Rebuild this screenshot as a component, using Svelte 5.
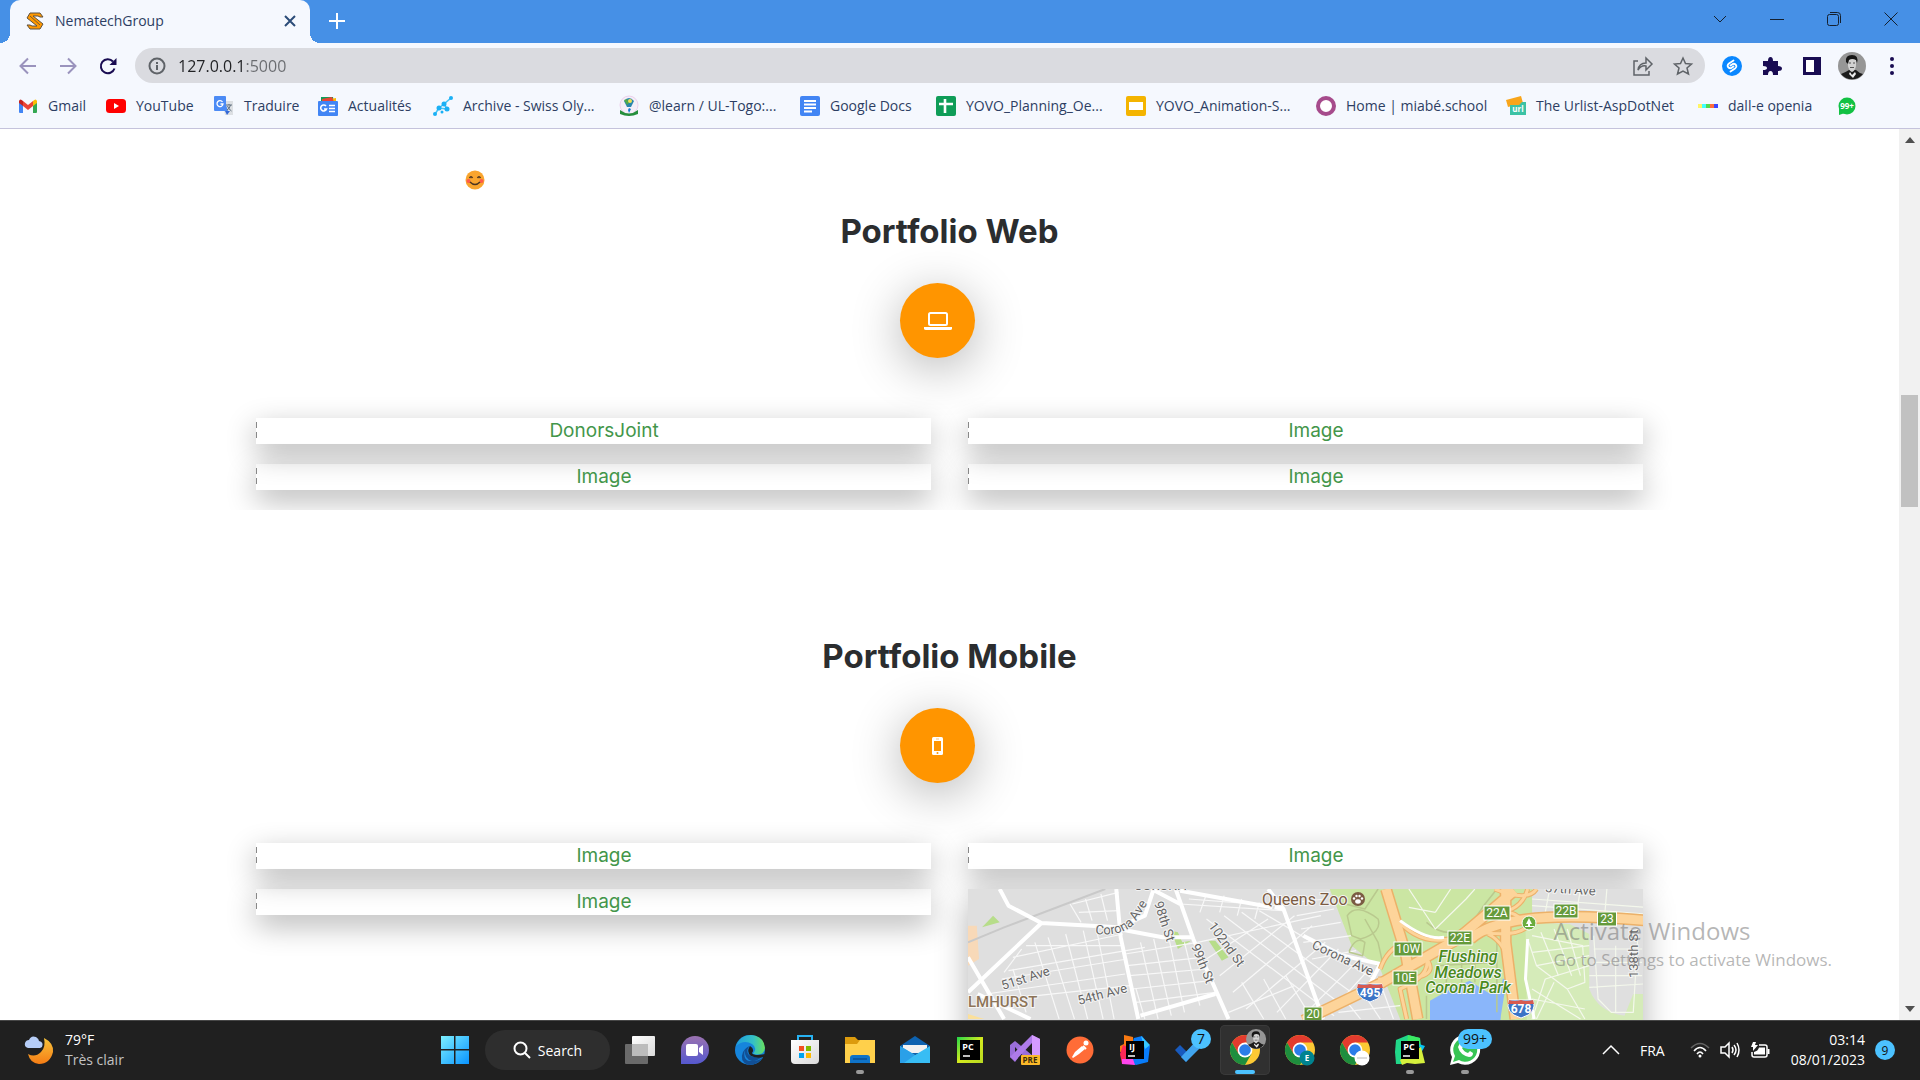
<script>
  const bookmarks = [
    ['gmail', 'Gmail'],
    ['youtube', 'YouTube'],
    ['translate', 'Traduire'],
    ['news', 'Actualités'],
    ['archive', 'Archive - Swiss Oly...'],
    ['learn', '@learn / UL-Togo:...'],
    ['docs', 'Google Docs'],
    ['sheets', 'YOVO_Planning_Oe...'],
    ['slides', 'YOVO_Animation-S...'],
    ['ring', 'Home | miabé.school'],
    ['urlist', 'The Urlist-AspDotNet'],
    ['dalle', 'dall-e openia'],
    ['chat99', '']
  ];

  const apps = [
    { icon: 'taskview', name: 'Task view' },
    { icon: 'meet', name: 'Chat' },
    { icon: 'edge', name: 'Microsoft Edge' },
    { icon: 'store', name: 'Microsoft Store' },
    { icon: 'explorer', name: 'File Explorer', open: true },
    { icon: 'mail', name: 'Mail' },
    { icon: 'pycharmEdu', name: 'PyCharm Edu' },
    { icon: 'vs', name: 'Visual Studio Preview' },
    { icon: 'postman', name: 'Postman' },
    { icon: 'intellij', name: 'IntelliJ IDEA' },
    { icon: 'todo', name: 'To Do', badge: '7' },
    { icon: 'chromePhoto', name: 'Google Chrome', active: true },
    { icon: 'chromeE', name: 'Google Chrome E' },
    { icon: 'chromeW', name: 'Google Chrome 2' },
    { icon: 'pycharm', name: 'PyCharm', open: true },
    { icon: 'whatsapp', name: 'WhatsApp', badge: '99+', open: true }
  ];

  const sections = [
    { title: 'Portfolio Web', icon: 'laptop', items: ['DonorsJoint', 'Image', 'Image', 'Image'], map: false },
    { title: 'Portfolio Mobile', icon: 'phone', items: ['Image', 'Image', 'Image'], map: true }
  ];

  const exits = [
    ['22A', 529, 24, 26], ['22B', 598, 22, 24], ['23', 639, 30, 19], ['22E', 492, 49, 24],
    ['10W', 440, 60, 28], ['10E', 437, 89, 24], ['20', 345, 125, 18]
  ];
  const shields = [['495', 402, 103], ['678', 553, 119]];
</script>

{#snippet chrome()}
  <circle cx="15" cy="15" r="15" fill="#fcc934" />
  <path d="M2 7.5A15 15 0 0 1 28 7.5L15 7.5L15 15L8.5 18.7Z" fill="#e33b2e" />
  <path d="M2 7.5A15 15 0 0 0 15 30L21.5 18.7L8.5 18.7Z" fill="#1e8e3e" />
  <circle cx="15" cy="15" r="7.4" fill="#fff" />
  <circle cx="15" cy="15" r="5.8" fill="#2b7de9" />
{/snippet}

{#snippet portrait()}
  <circle cx="14" cy="14" r="14" fill="#969696" />
  <path d="M3 22Q8 20 11 18L18 18Q21 21 25 22A14 14 0 0 1 3 22Z" fill="#1c1c1c" />
  <path d="M10 8Q14 4 18 8L18 14Q17 19 14 20Q11 19 10 14Z" fill="#d2d2d2" />
  <path d="M8 10Q7 3 14 3Q21 3 19 11L18 8Q14 6 11 8L10 12Z" fill="#161616" />
  <path d="M12 15.500h4M11 11h2M15 11h2" stroke="#555" stroke-width="1" />
  <path d="M12 20l2 3 3-3 1 2-3 4-4-4Z" fill="#eee" />
{/snippet}

{#snippet bookmarkIcon(name)}
  <svg class="bm-icon" viewBox="0 0 20 20" aria-hidden="true">
    {#if name === 'gmail'}
      <path d="M1 5v11q0 1 1 1h3V9Z" fill="#4285f4" />
      <path d="M15 9v8h3q1 0 1-1V5Z" fill="#34a853" />
      <path d="M15 5v5l4-3V5q-1-3-4 0Z" fill="#fbbc04" />
      <path d="M5 5l5 4 5-4v5l-5 4-5-4Z" fill="#ea4335" />
      <path d="M1 7l4 3V5Q2 2 1 5Z" fill="#c5221f" />
    {:else if name === 'youtube'}
      <rect y="3" width="20" height="14" rx="3.500" fill="#f00" /><path d="M8 7l5 3-5 3Z" fill="#fff" />
    {:else if name === 'translate'}
      <path d="M8 5h11v14h-8Z" fill="#dcdfe3" /><path d="M11 15h5l-3 4Z" fill="#3367d6" />
      <rect width="12" height="15" rx="1" fill="#4c8bf5" /><path d="M9 0l5 15H8Z" fill="#4c8bf5" />
      <path d="M8.500 6A3 3 0 1 0 9 8H6.500" fill="none" stroke="#fff" stroke-width="1.300" />
      <path d="M12 9h6M15 8v1M16.500 9q-1 4-3.500 5M13.500 10q1 3 4 5" fill="none" stroke="#607080" />
    {:else if name === 'news'}
      <path d="M3 1l12 0 1 5H3Z" fill="#0f9d58" /><path d="M8 4l10-2v5H7Z" fill="#fbbc04" /><path d="M4 3l10-2 2 5H4Z" fill="#ea4335" />
      <rect y="5" width="20" height="15" rx="1" fill="#4285f4" />
      <path d="M8 10A3 3 0 1 0 8.500 13H6M11 9.500h6M11 12.500h6M11 15.500h6" fill="none" stroke="#fff" stroke-width="1.600" />
    {:else if name === 'archive'}
      <path d="M2 18L6 12L14 13L11 8L18 2M6 12L11 8" fill="none" stroke="#48c4f4" stroke-width="1.600" />
      <g fill="#1ab0f5"><circle cx="2" cy="18" r="2" /><circle cx="6" cy="12" r="2.500" /><circle cx="14" cy="13" r="2.500" /><circle cx="11" cy="8" r="2.500" /><circle cx="18" cy="2" r="2" /><circle cx="9" cy="16" r="1.500" /></g>
    {:else if name === 'learn'}
      <circle cx="10" cy="9" r="9" fill="#f4eef8" stroke="#ecd0ec" /><path d="M5 5Q10-1 15 5L12 11H8Z" fill="#2985ad" />
      <path d="M5 4l3-1 2 4-2 2Z" fill="#50a84b" /><circle cx="11" cy="5" r="2" fill="#eee053" /><path d="M10 12l2 1-2 4-1-3Z" fill="#1678d0" />
      <path d="M1 14Q10 21 19 14V18Q10 22 1 18Z" fill="#258f3c" />
    {:else if name === 'docs'}
      <rect width="20" height="20" rx="2" fill="#4285f4" /><path d="M4 5h12M4 8.500h12M4 12h12M4 15.500h8" stroke="#fff" stroke-width="1.800" />
    {:else if name === 'sheets'}
      <rect width="20" height="20" rx="2" fill="#0f9d58" /><path d="M9 3v14M3 8h14" stroke="#fff" stroke-width="2.600" />
    {:else if name === 'slides'}
      <rect width="20" height="20" rx="2" fill="#f4b400" /><rect x="3" y="6" width="14" height="8" fill="#fff" />
    {:else if name === 'ring'}
      <circle cx="10" cy="10" r="8" fill="#fff" stroke="#a64b8c" stroke-width="4" />
    {:else if name === 'urlist'}
      <path d="M0 4L15 0l2 7L2 11Z" fill="#f8a51b" /><rect x="4" y="6" width="16" height="13" fill="#3cc2a5" />
      <path d="M4 9h9l3-3v-1L4 6Z" fill="#f8a51b" />
      <text x="12" y="16" class="tiny bold">url</text>
    {:else if name === 'dalle'}
      <path d="M0 8h4v4H0Z" fill="#fff566" /><path d="M4 8h4v4H4Z" fill="#42ffff" /><path d="M8 8h4v4H8Z" fill="#51da4c" /><path d="M12 8h4v4h-4Z" fill="#ff6e3c" /><path d="M16 8h4v4h-4Z" fill="#3c46ff" />
    {:else}
      <circle cx="10" cy="10" r="8.500" fill="#12c143" /><path d="M2 12v7l6-2Z" fill="#12c143" /><text x="10" y="13" class="tiny bold">99+</text>
    {/if}
  </svg>
{/snippet}

{#snippet appIcon(name)}
  <svg class="app-icon" viewBox="0 0 30 30" aria-hidden="true">
    {#if name === 'taskview'}
      <rect x="7" y="1" width="23" height="20" rx="1" fill="url(#g-white)" /><rect x="0" y="9" width="23" height="20" rx="1" fill="#7d7d7d" opacity=".8" /><rect x="7" y="9" width="16" height="12" fill="#bcbcbc" />
    {:else if name === 'meet'}
      <path d="M1 29V15A14 14 0 1 1 15 29Z" fill="url(#g-meet)" /><rect x="6" y="9" width="12" height="12" rx="2" fill="#fff" /><path d="M19 13l4-3v10l-4-3Z" fill="#fff" />
    {:else if name === 'edge'}
      <circle cx="15" cy="15" r="15" fill="#1685dc" />
      <path d="M1 11Q5 0 16 0Q29 1 30 13Q29 21 18 19Q23 13 17 9Q9 4 1 11Z" fill="url(#g-edge)" />
      <path d="M10 15Q7 27 18 26Q24 26 28 22Q22 31 13 30Q4 26 8 17Q11 12 15 11Q10 15 14 20Q19 24 28 21Q23 26 17 26Q9 24 10 15Z" fill="#114f95" />
      <path d="M15 11Q20 14 17 18Q18 20 23 20L30 19L29 22Q22 24 16 21Q11 17 15 11Z" fill="#202020" />
    {:else if name === 'store'}
      <path d="M8 8V1h14v7" fill="none" stroke="#27b2f2" stroke-width="2" /><path d="M1 5h28v20q0 4-4 4H5q-4 0-4-4Z" fill="url(#g-white)" />
      <path d="M9 11h5v5H9Z" fill="#f25022" /><path d="M16 11h5v5h-5Z" fill="#7fba00" /><path d="M9 18h5v5H9Z" fill="#00a4ef" /><path d="M16 18h5v5h-5Z" fill="#ffb900" />
    {:else if name === 'explorer'}
      <path d="M0 2h10l3 3h17v5H0Z" fill="#dc9b0d" /><path d="M0 9l12 0 3-4h15v23H0Z" fill="#ffd04b" /><path d="M5 28v-5q0-3 3-3h14q3 0 3 3v5Z" fill="#0f73c8" /><path d="M8 24h14" stroke="#0b4f95" stroke-width="1.500" />
    {:else if name === 'mail'}
      <path d="M0 11L15 1l15 10-15 9Z" fill="#0d62b0" /><path d="M3 10h24v8H3Z" fill="#f1f1f1" /><path d="M0 11l15 9 15-9v17H0Z" fill="#38bdf4" /><path d="M0 11l15 9-11 8H0Z" fill="#2aa0e8" />
    {:else if name === 'pycharmEdu'}
      <rect x="2" y="2" width="26" height="26" fill="url(#g-edu)" /><rect x="5" y="5" width="20" height="20" fill="#000" /><text x="13" y="15" class="ide">PC</text><path d="M8 21h7" stroke="#fff" stroke-width="1.500" />
    {:else if name === 'vs'}
      <path d="M0 10l5-4 18 15v4L18 26 5 12v8l3 3-3 4-5-5Z" fill="#9b6edb" /><path d="M0 22L22 0l8 4v22l-8 3V8L5 26Z" fill="#ae7bea" /><path d="M22 0l8 4v22l-8 3Z" fill="#d59bff" />
      <rect x="11" y="20" width="19" height="10" rx="1" fill="#fbb92a" /><text x="20" y="28" class="pre">PRE</text>
    {:else if name === 'postman'}
      <circle cx="15" cy="15" r="13.500" fill="#ff6c37" /><path d="M7 22l3-5 7-6 3 3-6 5-6 4Z" fill="#fff" /><circle cx="21" cy="8" r="2.500" fill="#fff" /><path d="M18 11l3 3" stroke="#fff" stroke-width="2" />
    {:else if name === 'intellij'}
      <path d="M4 0l9 2 1 12L0 17V11l4-2Z" fill="#f97a12" /><path d="M3 10l11 5-2 13-10 1-2-10Z" fill="#fe2857" /><path d="M14 3l8-2 8 10-2 16-12 3-9-3Z" fill="#087cfa" /><path d="M21 1l9 9-5 4Z" fill="#36c7ff" /><path d="M2 24l11 0 2 6-13-1Z" fill="#ff45ed" />
      <rect x="6" y="6" width="18" height="18" fill="#000" /><text x="12" y="15" class="ide">IJ</text><path d="M8 21h7" stroke="#fff" stroke-width="1.500" />
    {:else if name === 'todo'}
      <path d="M0 15l5-5 11 11-5 6Z" fill="#185abd" /><path d="M6 22L23 4l6 5-18 18Z" fill="#41a5ee" />
    {:else if name === 'chromePhoto'}
      {@render chrome()}<g transform="translate(16 -6) scale(.72)">{@render portrait()}</g>
    {:else if name === 'chromeE'}
      {@render chrome()}<circle cx="22" cy="23" r="7.500" fill="#00838f" /><text x="22" y="26" class="pre light">E</text>
    {:else if name === 'chromeW'}
      {@render chrome()}<circle cx="22" cy="23" r="7.500" fill="#fff" /><path d="M17 23h10" stroke="#bbb" />
    {:else if name === 'pycharm'}
      <path d="M1 5l12-5 12 3 1 8L8 29H1L0 17Z" fill="#21d789" /><path d="M13 0l12 3 0 7-13-1Z" fill="#3bea62" /><path d="M24 9l6 2-4 7Z" fill="#07c3f2" /><path d="M5 25L26 12l4 16-10 1-8-1-5 2Z" fill="#d6f03c" />
      <rect x="6" y="6" width="18" height="18" fill="#000" /><text x="14" y="15" class="ide">PC</text><path d="M8 21h7" stroke="#fff" stroke-width="1.500" />
    {:else}
      <path d="M0 30l2-8A15 15 0 1 1 8 28Z" fill="#fff" /><path d="M3 27l2-6A12 12 0 1 1 9 25Z" fill="#37c553" />
      <path d="M10 8q2-1 3 2l0 2-1 1q2 4 6 5l2-2 3 2q0 4-4 4Q10 20 8 12Z" fill="#fff" />
    {/if}
  </svg>
{/snippet}

{#snippet map()}
  <svg class="map" viewBox="0 0 675 180" role="img" aria-label="Map of Flushing Meadows Corona Park">
    <rect width="675" height="180" fill="#dfdfdf" />
    <g class="shapes" transform="matrix(.44 0 0 .33333 -7.92 -10)">
      <path d="M840 30H1300V600H1010L1000 420L955 270L890 200Z" fill="#cbe6a3" />
      <path d="M1285 130L1385 135L1430 165V330Q1450 400 1510 410L1530 345H1560V600H1290Z" fill="#d5ebb9" />
      <path d="M18 140l20 0 5 100-25 20Z" fill="#f8d9b8" /><path d="M50 145l25-35 15 20Z" fill="#b7dd8a" />
      <path d="M480 155l15 5 10 30 20-5-30 25ZM565 185l15 0 30 50-15 10Z" fill="#b7dd8a" />
      <path d="M1068 600V365L1108 335L1158 305L1205 345L1228 335V600Z" fill="#8ab6fa" />
      <path class="water" d="M1236 175Q1240 250 1262 345M1222 430L1238 300" />
      <path class="minor" d="M250 75L275 130M285 60L300 125M320 45L335 125M255 75L360 40M270 100L360 95M110 275L420 205M120 235L370 165M150 200L370 200M95 300L380 240M60 345L375 285M105 360L385 320M170 190L225 420M200 175L260 420M240 165L290 420M280 155L325 420M310 150L350 420M140 210L100 280M120 270L150 400M400 330L420 420M380 260L550 235M385 290L560 270M390 330L570 305M400 370L580 340M375 225L540 190M410 190L450 420M440 180L480 410M475 180L510 400M510 190L545 380" />
      <path class="minor" d="M520 60L720 80M500 75L735 95M560 45L545 100M600 50L590 100M640 60L630 110M680 70L670 120M560 120L850 410M600 110L870 380M640 100L900 350M680 95L940 300M540 190L820 110M560 240L700 120M590 290L760 110M620 340L800 140M650 390L830 190M720 400L860 210M780 410L900 250M840 400L930 270M760 70L830 60M765 110L850 90M775 150L865 130M780 190L890 170M800 240L900 215" />
      <path class="minor" d="M610 400L760 320M640 310L690 420M690 300L740 420M740 290L800 420M880 370L910 420M920 350L955 420M960 330L985 420M860 400L1000 380" />
      <path class="rail" d="M18 190L100 145L330 30" />
      <path class="street" d="M18 340L185 132L360 145L420 110L440 30M355 30L365 175L405 420M185 132L110 80L90 30M18 235L100 420M40 345L160 420M500 75L435 30M490 30L530 180L610 420M500 35L710 85M715 85L735 90L825 420M700 30L735 90M360 150L460 175L530 175M580 345L410 410M780 170L870 230L955 255L930 320" />
      <path class="path" d="M880 110Q900 70 950 120Q960 160 910 180L890 170ZM885 215Q900 170 920 190L915 230L885 220ZM920 120L950 190L960 250M860 70L920 90L950 30M1060 130Q1130 210 1190 80L1220 30M1080 260L1220 250M1110 240L1105 310M1140 245V310M1170 245V310M1060 350V420M1220 190L1220 400" />
      <path class="parkpath" d="M1020 30L1080 150L1150 60L1170 30M1080 100L1115 30M1080 100L1020 85M1290 180L1310 260L1380 330L1420 310L1415 200L1300 170M1320 160L1360 290M1350 150L1390 290M1380 150L1410 290M1300 220L1430 200M1310 260L1430 230M1330 300L1430 260M1300 330L1410 420M1330 300L1300 420M1350 310L1310 420M1380 330L1420 420M1300 360L1420 390M1440 170L1450 360L1480 400L1530 400L1540 180M1440 210H1550M1440 250H1550M1430 290H1550M1430 325L1552 315M1490 200V400M1300 60L1560 85M1300 80L1560 105M1340 30L1330 100M1410 30L1400 110M1470 30L1465 110" />
      <path class="casing thick" d="M968 30L1012 220L1040 420M780 425L960 310L1130 180L1260 35M1240 30L1240 190L1262 420M1160 180Q1240 85 1560 125" />
      <path class="casing" d="M985 110Q1040 200 1110 180L1200 110Q1250 75 1290 140Q1270 175 1180 160L1060 240Q1070 290 1000 330L1015 420M955 270Q970 210 1010 190M1290 30Q1275 100 1215 100L1100 200M1215 30Q1290 70 1310 30M1200 165Q1240 190 1250 270M950 300Q1100 310 1060 240" />
      <path class="road thick" d="M968 30L1012 220L1040 420M780 425L960 310L1130 180L1260 35M1240 30L1240 190L1262 420M1160 180Q1240 85 1560 125" />
      <path class="road" d="M985 110Q1040 200 1110 180L1200 110Q1250 75 1290 140Q1270 175 1180 160L1060 240Q1070 290 1000 330L1015 420M955 270Q970 210 1010 190M1290 30Q1275 100 1215 100L1100 200M1215 30Q1290 70 1310 30M1200 165Q1240 190 1250 270M950 300Q1100 310 1060 240" />
      <path class="edge-line" d="M1290 180L1285 300L1305 420M1000 125Q1060 185 1100 175" />
      <path d="M18 405L55 420H18Z" fill="#fbe09c" />
    </g>
    <path id="corona-curve" d="M127 45Q155 48 167 34L185 6" fill="none" />
    <g class="labels">
      <text x="166" y="1">CORONA</text>
      <text><textPath href="#corona-curve">Corona Ave</textPath></text>
      <text transform="translate(186 14) rotate(72)">98th St</text>
      <text transform="translate(223 57) rotate(68)">99th St</text>
      <text transform="translate(240 37) rotate(54)">102nd St</text>
      <text transform="translate(343 59) rotate(25)">Corona Ave</text>
      <text transform="translate(35 101) rotate(-18)">51st Ave</text>
      <text transform="translate(111 116) rotate(-15)">54th Ave</text>
      <text transform="translate(670 89) rotate(-90)">138th St</text>
      <text transform="translate(577 3) rotate(4)">37th Ave</text>
      <text class="brown" x="294" y="16">Queens Zoo</text>
      <text class="brown area" x="0" y="118">LMHURST</text>
      <g class="park"><text x="500" y="73">Flushing</text><text x="500" y="89">Meadows</text><text x="500" y="104">Corona Park</text></g>
    </g>
    <circle cx="390" cy="10" r="7" fill="#7b5b43" />
    <g fill="#fff"><ellipse cx="390" cy="12.500" rx="2.800" ry="2.200" /><circle cx="386" cy="9.500" r="1.200" /><circle cx="388.500" cy="7" r="1.200" /><circle cx="391.500" cy="7" r="1.200" /><circle cx="394" cy="9.500" r="1.200" /></g>
    <circle cx="561" cy="34" r="7" fill="#6aac3d" stroke="#fff" /><path d="M561 29l3 6h-2v2h4v1h-9v-1h3v-2h-2Z" fill="#fff" />
    {#each exits as [label, x, y, w]}
      <rect x={x - w / 2} y={y - 7} width={w} height="14" fill="#659a3b" stroke="#fff" />
      <text class="exit" {x} y={y + 4}>{label}</text>
    {/each}
    {#each shields as [label, x, y]}
      <g transform="translate({x} {y})"><path d="M-12-8L12-8Q17 5 0 10Q-17 5-12-8Z" fill="#3b74c6" stroke="#fff" /><path d="M-12-8Q-6-6 0-8Q6-6 12-8L13-4H-13Z" fill="#d75a50" /></g>
      <text class="exit bold" {x} y={y + 5}>{label}</text>
    {/each}
  </svg>
{/snippet}

<svg class="defs" aria-hidden="true">
  <defs>
    <linearGradient id="g-white" x2="1" y2="1"><stop stop-color="#fff" /><stop offset="1" stop-color="#dadada" /></linearGradient>
    <linearGradient id="g-meet" x2="0" y2="1"><stop stop-color="#9b72b0" /><stop offset="1" stop-color="#5558cf" /></linearGradient>
    <linearGradient id="g-edge"><stop stop-color="#1f9fdc" /><stop offset=".6" stop-color="#35c1c4" /><stop offset="1" stop-color="#69e15c" /></linearGradient>
    <linearGradient id="g-edu" x2="1" y2="1"><stop stop-color="#21d74a" /><stop offset=".5" stop-color="#d5ea1e" /><stop offset="1" stop-color="#b7d922" /></linearGradient>
    <linearGradient id="g-win" x2="1" y2="1"><stop stop-color="#7df0ff" /><stop offset="1" stop-color="#0993ff" /></linearGradient>
    <linearGradient id="g-moon" x2="0" y2="1"><stop stop-color="#f7c43c" /><stop offset="1" stop-color="#f57c14" /></linearGradient>
  </defs>
</svg>

<div class="desktop">
  <header>
    <div class="tabs">
      <div class="tab">
        <svg class="favicon" viewBox="0 0 18 18" aria-hidden="true"><path d="M4 1h10l3 4-3 0-2-1-5 0 10 8-3 5H4L1 13l3 0 2 1 5 0L1 6Z" fill="#ff9800" stroke="#5d5140" /><path d="M4 4l10 9" stroke="#7a5a28" /></svg>
        <span>NematechGroup</span>
        <button class="tab-close" aria-label="Close tab"><svg viewBox="0 0 12 12"><path d="M1 1l10 10M11 1L1 11" stroke-width="2" /></svg></button>
      </div>
      <button class="new-tab" aria-label="New tab"><svg viewBox="0 0 16 16"><path d="M8 0v16M0 8h16" stroke-width="2" /></svg></button>
      <div class="window-buttons">
        <button aria-label="Search tabs"><svg viewBox="0 0 14 14"><path d="M1 4l6 6 6-6" /></svg></button>
        <button aria-label="Minimize"><svg viewBox="0 0 14 14"><path d="M0 7.500h14" /></svg></button>
        <button aria-label="Restore"><svg viewBox="0 0 14 14"><rect x=".5" y="2.500" width="11" height="11" rx="2" /><path d="M3 .5h7.500q3 0 3 3V11" /></svg></button>
        <button aria-label="Close"><svg viewBox="0 0 14 14"><path d="M.5.5l13 13M13.500.5l-13 13" /></svg></button>
      </div>
    </div>
    <div class="toolbar">
      <button class="nav dim" aria-label="Back"><svg viewBox="0 0 18 18"><path d="M17 9H2M9 1.500L1.500 9 9 16.500" /></svg></button>
      <button class="nav dim" aria-label="Forward"><svg viewBox="0 0 18 18"><path d="M1 9h15M9 1.500L16.500 9 9 16.500" /></svg></button>
      <button class="nav" aria-label="Reload"><svg viewBox="0 0 18 18"><path d="M15.500 11.500A7 7 0 1 1 14 4.500" /><path d="M17.500 1v7h-7Z" class="solid" /></svg></button>
      <div class="omnibox">
        <svg class="info" viewBox="0 0 18 18" aria-hidden="true"><circle cx="9" cy="9" r="7.500" /><path d="M9 8v5M9 5v2" /></svg>
        <input aria-label="Address" value="127.0.0.1:5000" />
        <button aria-label="Share"><svg viewBox="0 0 20 20"><path d="M5 5H1v14h15v-4" /><path d="M5 14Q6 7 13 7V2l6 6-6 6v-4Q8 9 5 14Z" /></svg></button>
        <button aria-label="Bookmark"><svg viewBox="0 0 20 20"><path d="M10 2l2.500 5.500 6 .5-4.500 4 1.500 6L10 15l-5.500 3L6 12 1.500 8l6-.5Z" /></svg></button>
      </div>
      <div class="extensions">
        <button aria-label="Shazam"><svg viewBox="0 0 20 20"><circle cx="10" cy="10" r="10" fill="#0a87ff" /><path d="M11.500 4.500L7 7.500Q4.500 9.500 6.500 11.500Q8 13 10 11.500L11.500 10.500M8.500 15.500L13 12.500Q15.500 10.500 13.500 8.500Q12 7 10 8.500L8.500 9.500" fill="none" stroke="#fff" stroke-width="1.800" stroke-linecap="round" /></svg></button>
        <button aria-label="Extensions"><svg viewBox="0 0 20 20"><path d="M1 5h5Q6 1 8.500 1T11 5h5v5q4 0 4 2.500T16 15v4h-5q0-4-2.500-4T6 19H1v-5q4 0 4-2t-4-2Z" fill="#190c52" /></svg></button>
        <button aria-label="Side panel"><svg viewBox="0 0 20 20"><path d="M1 1h18v18H1Z" fill="#190c52" /><path d="M4 4h8v12H4Z" fill="#fff" /></svg></button>
        <button aria-label="Profile"><svg class="avatar" viewBox="0 0 28 28">{@render portrait()}</svg></button>
        <button aria-label="Menu"><svg viewBox="0 0 20 20" fill="#190c52"><circle cx="10" cy="3" r="2" /><circle cx="10" cy="10" r="2" /><circle cx="10" cy="17" r="2" /></svg></button>
      </div>
    </div>
    <nav aria-label="Bookmarks">
      {#each bookmarks as [icon, label]}
        <a href="#{icon}" aria-label={label || '99+'}>{@render bookmarkIcon(icon)}{#if label}<span>{label}</span>{/if}</a>
      {/each}
    </nav>
  </header>

  <div class="viewport">
    <main>
      <p class="intro">
        <svg viewBox="0 0 20 20" role="img" aria-label="Smiling face"><circle cx="10" cy="10" r="9.500" fill="#f9a52e" /><circle cx="3.500" cy="11" r="2" fill="#ff5a4a" /><circle cx="16.500" cy="11" r="2" fill="#ff5a4a" /><path d="M4.500 8q1.500-2.500 3 0M12.500 8q1.500-2.500 3 0M5 12q5 5 10 0" fill="none" stroke="#4b3420" stroke-width="1.500" /></svg>
      </p>
      {#each sections as section}
        <section>
          <h2>{section.title}</h2>
          <div class="disc">
            {#if section.icon === 'laptop'}
              <svg class="laptop" viewBox="0 0 28 18" aria-hidden="true"><rect x="5" y="1" width="18" height="12" rx="1.500" fill="none" stroke="#fff" stroke-width="2" /><path d="M0 15h28v1.500q0 1.500-2 1.500H2q-2 0-2-1.500Z" fill="#fff" /></svg>
            {:else}
              <svg class="phone" viewBox="0 0 11 18" aria-hidden="true"><rect width="11" height="18" rx="1.500" fill="#fff" /><path d="M2 4h7v10H2Z" fill="#ff9500" /><path d="M4 2h3" stroke="#ffc477" /><circle cx="5.500" cy="16" r="1" fill="#ff9500" /></svg>
            {/if}
          </div>
          <div class="gallery">
            {#each section.items as item}
              <a class="shot" href="#image">{item}</a>
            {/each}
            {#if section.map}<a class="map-shot" href="#map" aria-label="Map">{@render map()}</a>{/if}
          </div>
        </section>
      {/each}
    </main>
    <div class="scrollbar" aria-hidden="true">
      <svg viewBox="0 0 10 6"><path d="M0 6l5-6 5 6Z" /></svg>
      <div class="track"><div class="thumb"></div></div>
      <svg viewBox="0 0 10 6"><path d="M0 0h10L5 6Z" /></svg>
    </div>
    <div class="watermark"><strong>Activate Windows</strong><span>Go to Settings to activate Windows.</span></div>
  </div>

  <footer>
    <button class="weather">
      <svg viewBox="0 0 30 30" aria-hidden="true"><path d="M20 3Q30 8 29 17Q26 29 15 29Q6 28 4 19Q11 23 17 17Q22 12 20 3Z" fill="url(#g-moon)" /><path d="M4 13Q0 12 1 8Q2 5 5 5Q7 0 12 2Q15 4 15 6Q20 7 18 12L16 13Z" fill="#b6cdf7" /></svg>
      <span>79°F<small>Très clair</small></span>
    </button>
    <div class="dock">
      <button class="app" aria-label="Start"><svg class="app-icon" viewBox="0 0 30 30"><path d="M1 1h13v13H1ZM15.500 1H29v13H15.500ZM1 15.500h13V29H1ZM15.500 15.500H29V29H15.500Z" fill="url(#g-win)" /></svg></button>
      <button class="search"><svg viewBox="0 0 18 18" aria-hidden="true"><circle cx="7.500" cy="7.500" r="6" /><path d="M12 12l5 5" /></svg>Search</button>
      {#each apps as app}
        <button class="app" class:active={app.active} class:open={app.open} aria-label={app.name}>
          {@render appIcon(app.icon)}
          {#if app.badge}<span class="badge" class:wide={app.badge.length > 1}>{app.badge}</span>{/if}
        </button>
      {/each}
    </div>
    <div class="tray">
      <button aria-label="Hidden icons"><svg class="up" viewBox="0 0 18 10"><path d="M1 9l8-8 8 8" /></svg></button>
      <button class="lang">FRA</button>
      <button class="status" aria-label="Network, volume, battery">
        <svg viewBox="0 0 20 16"><path d="M1 6Q10-3 19 6" opacity=".3" /><path d="M4 9Q10 2 16 9M7 12Q10 8 13 12" /><circle cx="10" cy="14" r="1.500" class="fill" /></svg>
        <svg viewBox="0 0 20 16"><path d="M1 5h4l4-4v14l-4-4H1ZM12 5q2 3 0 6M14 3q4 5 0 10M17 1q4 7 0 14" /></svg>
        <svg viewBox="0 0 20 16"><path d="M9 3h6q2 0 2 2v8q0 2-2 2H4q-2 0-2-2V10" /><path d="M9 5.500h6v7H4V10q4-1 5-4.500Z" class="fill" /><path d="M18.500 7v5" stroke-width="2" /><path d="M3 0h3L5 3h3L3 9V5H1Z" class="fill" /></svg>
      </button>
      <button class="clock"><time>03:14<br />08/01/2023</time></button>
      <button class="count" aria-label="9 notifications">9</button>
    </div>
  </footer>
</div>

<style>
  :global(body) { margin: 0; overflow: hidden; }
  .desktop { display: flex; flex-direction: column; height: 100vh; font-family: "Open Sans", "Noto Sans", sans-serif; font-size: 14px; color: #2d3e63; background: #fff; }
  .defs { position: absolute; width: 0; height: 0; }
  button { padding: 0; border: 0; background: none; color: inherit; font: inherit; display: flex; align-items: center; justify-content: center; }
  a { color: inherit; text-decoration: none; }
  svg { display: block; flex: none; overflow: visible; }

  header { background: #f5f8fe; border-bottom: 1px solid #c5c3dc; }
  .tabs { display: flex; height: 43px; padding-left: 10px; background: #4690e6; }
  .tab { position: relative; display: flex; align-items: center; box-sizing: border-box; width: 300px; padding: 0 14px 2px 16px; gap: 11px; border-radius: 10px 10px 0 0; background: #f5f8fe; }
  .tab::before, .tab::after { content: ""; position: absolute; bottom: 0; width: 10px; height: 10px; }
  .tab::before { right: 100%; background: radial-gradient(circle at 0 0, transparent 10px, #f5f8fe 10px); }
  .tab::after { left: 100%; background: radial-gradient(circle at 100% 0, transparent 10px, #f5f8fe 10px); }
  .favicon { width: 18px; height: 18px; }
  .tab span { flex: 1; }
  .tab-close svg { width: 12px; height: 12px; stroke: #2b4c78; }
  .new-tab { margin-left: 19px; padding-bottom: 1px; }
  .new-tab svg { width: 16px; height: 16px; stroke: #fff; }
  .window-buttons { display: flex; margin-left: auto; padding: 0 1px 6px 0; }
  .window-buttons button { width: 57px; }
  .window-buttons svg { width: 14px; height: 14px; fill: none; stroke: #14202f; stroke-width: 1; }

  .toolbar { display: flex; align-items: center; height: 45px; padding-left: 8px; }
  .nav { width: 40px; height: 36px; }
  .nav svg { width: 18px; height: 18px; fill: none; stroke: #190c52; stroke-width: 2; }
  .nav .solid { fill: #190c52; stroke: none; }
  .nav.dim svg { stroke: #9a93bd; }
  .omnibox { flex: 1; display: flex; align-items: center; height: 35px; margin-left: 7px; padding: 0 2px 0 13px; border-radius: 18px; background: #dadbe0; }
  .omnibox svg { width: 18px; height: 18px; fill: none; stroke: #5f6368; stroke-width: 2; }
  .omnibox input { flex: 1; min-width: 0; margin-left: 12px; padding: 0; border: 0; outline: 0; font: inherit; font-size: 16px; color: transparent; background: linear-gradient(to right, #202124 68px, #6a6c70 68px); background-clip: text; }
  .omnibox button { width: 40px; }
  .omnibox button svg { width: 20px; height: 20px; stroke-width: 1.5; }
  .extensions { display: flex; align-items: center; padding: 0 8px 0 7px; }
  .extensions button { width: 40px; }
  .extensions svg { width: 20px; height: 20px; }
  .extensions .avatar { width: 28px; height: 28px; }
  nav { display: grid; grid-template-columns: 88px 108px 104px 115px 186px 181px 136px 190px 190px 190px 192px 139px 20px; align-items: center; box-sizing: border-box; height: 40px; padding: 0 0 5px 18px; }
  nav a { display: flex; align-items: center; gap: 10px; white-space: nowrap; }
  .bm-icon { width: 20px; height: 20px; }
  .tiny { font: 8px "Open Sans", sans-serif; fill: #fff; text-anchor: middle; }
  .bold { font-weight: 700; }

  .viewport { position: relative; flex: 1; min-height: 0; display: flex; overflow: hidden; }
  main { flex: 1; height: 100%; overflow: hidden; }
  .intro { box-sizing: border-box; width: 73%; max-width: 1387px; height: 30px; margin: 36px auto 16px; padding: 5px 0 0 209px; }
  .intro svg { width: 20px; height: 20px; }
  section { padding-bottom: 20px; overflow: hidden; }
  section + section { margin-top: 126px; padding-bottom: 60px; }
  h2 { margin: 0; font: 700 33px/40px Inter, sans-serif; font-variant-ligatures: none; text-align: center; color: #2b2d2f; }
  .disc { display: flex; align-items: center; justify-content: center; width: 75px; height: 75px; margin: 32px auto 60px; border-radius: 50%; background: #ff9500; box-shadow: 0 10px 50px rgba(0, 0, 0, .3); translate: -12px 0; }
  .laptop { width: 28px; height: 18px; }
  .phone { width: 11px; height: 18px; }
  .gallery { display: grid; grid-template-columns: 1fr 1fr; align-items: start; gap: 20px 37px; width: 73.1%; max-width: 1387px; margin: 0 auto; }
  .shot, .map-shot { box-shadow: 0 10px 30px rgba(0, 0, 0, .3); }
  .shot { display: block; box-sizing: border-box; height: 26px; padding-left: 21px; font: 19px/26px Inter, sans-serif; text-align: center; color: #43964a; background: linear-gradient(#888 0 0) 0 4px / 1px 6px no-repeat, linear-gradient(#888 0 0) 0 14px / 1px 6px no-repeat; }
  .map { width: 100%; height: auto; overflow: hidden; }
  .shapes path { vector-effect: non-scaling-stroke; }
  .minor, .street, .rail, .path, .parkpath, .water, .casing, .road, .edge-line { fill: none; stroke-linejoin: round; }
  .minor { stroke: #f8f8f8; stroke-width: 1.2; }
  .street { stroke: #fff; stroke-width: 4; }
  .rail { stroke: #c9c9c9; stroke-width: 2; }
  .path { stroke: #b9c98e; stroke-width: 1.5; }
  .parkpath { stroke: #f4f8ec; stroke-width: 1.2; }
  .water { stroke: #8ab6fa; stroke-width: 4; }
  .casing { stroke: #ecb169; stroke-width: 5; }
  .road { stroke: #fdd49a; stroke-width: 3; }
  .casing.thick { stroke-width: 12; }
  .road.thick { stroke-width: 9; }
  .edge-line { stroke: #fff; stroke-width: 3; }
  .labels { font: 13px Roboto, sans-serif; fill: #666; stroke: #f5f5f5; stroke-width: 2; paint-order: stroke; }
  .brown { font-size: 16px; fill: #7b5b43; }
  .area { fill: #8d7458; font-size: 15px; font-weight: 500; }
  .park { font-size: 16px; font-style: italic; font-weight: 500; fill: #4a8a1c; text-anchor: middle; }
  .exit { font: 12px Roboto, sans-serif; fill: #fff; text-anchor: middle; }
  .exit.bold { font-weight: 700; }

  .scrollbar { display: flex; flex-direction: column; align-items: center; width: 21px; padding: 8px 0; box-sizing: border-box; background: #f1f1f1; fill: #505050; }
  .scrollbar svg { width: 10px; height: 6px; }
  .track { flex: 1; width: 17px; }
  .thumb { height: 13%; margin-top: 252px; background: #c1c1c1; }
  .watermark { position: absolute; right: 88px; bottom: 48px; display: flex; flex-direction: column; color: rgba(110, 110, 110, .5); font-size: 17px; line-height: 24px; }
  .watermark strong { font-weight: 400; font-size: 24px; line-height: 34px; }

  footer { display: grid; grid-template-columns: 1fr auto 1fr; align-items: center; box-sizing: border-box; height: 60px; padding-bottom: 1px; border-top: 1px solid #474747; background: #202020; color: #fff; }
  .weather { justify-self: start; gap: 11px; margin-left: 24px; text-align: left; line-height: 20px; }
  .weather svg { width: 30px; height: 30px; }
  .weather small { display: block; font-size: 14px; color: #c3c3c3; }
  .dock { display: flex; gap: 5px; }
  .app { position: relative; width: 50px; height: 50px; border-radius: 5px; }
  .app.active { background: #303030; box-shadow: inset 0 0 0 1px #3a3a3a; }
  .app-icon { width: 30px; height: 30px; }
  .app.open::after, .app.active::after { content: ""; position: absolute; bottom: 1px; width: 8px; height: 4px; border-radius: 2px; background: #999; }
  .app.active::after { width: 20px; background: #4cc2ff; }
  .badge { position: absolute; top: 4px; right: 4px; box-sizing: border-box; min-width: 20px; height: 20px; border-radius: 10px; background: #4cc2ff; color: #111; line-height: 20px; }
  .badge.wide { right: -2px; padding: 0 5px; }
  .search { width: 125px; height: 40px; align-self: center; gap: 7px; border-radius: 20px; background: #2e2e2e; }
  .search svg { width: 18px; height: 18px; fill: none; stroke: #fff; stroke-width: 2; }
  .ide { font: 700 9px "Open Sans", sans-serif; fill: #fff; text-anchor: middle; }
  .pre { font: 700 8px "Open Sans", sans-serif; fill: #3a2a08; text-anchor: middle; }
  .pre.light { fill: #fff; }
  .tray { justify-self: end; display: flex; align-items: center; margin-right: 25px; }
  .tray svg { fill: none; stroke: #fff; stroke-width: 1.5; }
  .tray .fill { fill: #fff; stroke: none; }
  .up { width: 18px; height: 10px; }
  .lang { margin: 0 25px 0 20px; }
  .status { gap: 10px; }
  .status svg { width: 20px; height: 16px; }
  .clock { margin: 0 10px 0 21px; text-align: right; line-height: 20px; }
  .count { width: 20px; height: 20px; border-radius: 50%; background: #4cc2ff; color: #111; font-size: 12px; }
</style>
